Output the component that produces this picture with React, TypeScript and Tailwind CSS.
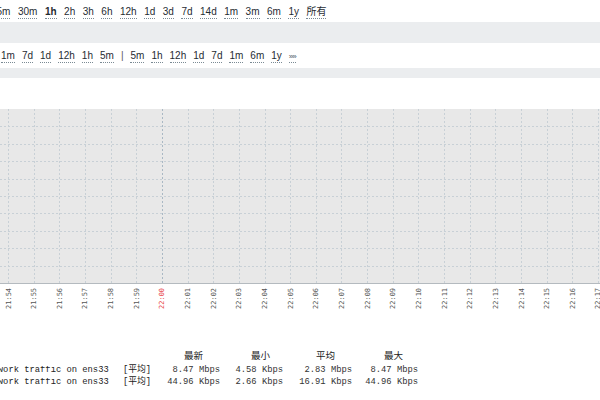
import React from "react";

const zoomLinks = ["15m", "30m", "1h", "2h", "3h", "6h", "12h", "1d", "3d", "7d", "14d", "1m", "3m", "6m", "1y", "所有"];
const navLinks = ["1m", "7d", "1d", "12h", "1h", "5m", "|", "5m", "1h", "12h", "1d", "7d", "1m", "6m", "1y", "»»"];

// minute labels along the x axis, 21:54 .. 22:17
const ticks = Array.from({ length: 24 }, (_, i) => {
  const total = 21 * 60 + 54 + i;
  const h = Math.floor(total / 60);
  const m = total % 60;
  return `${h}:${String(m).padStart(2, "0")}`;
});

const STEP = 25.65;
const GRID_H = 174;

function Chart() {
  return (
    <svg width={600} height={240} className="block">
      <rect x={0} y={0} width={600} height={GRID_H} fill="#e8e8e8" />
      {/* horizontal grid */}
      {Array.from({ length: 9 }, (_, k) => {
        const y = Math.round((k + 1) * 17.4) + 0.5;
        return (
          <line key={"h" + k} x1={0} x2={600} y1={y} y2={y} stroke="#c8d0d6" strokeDasharray="2 2" />
        );
      })}
      {/* vertical grid */}
      {ticks.map((t, i) => {
        const x = Math.round(8 + i * STEP) + 0.5;
        return (
          <line
            key={"v" + i}
            x1={x}
            x2={x}
            y1={0}
            y2={GRID_H}
            stroke={t === "22:00" ? "#a9b8c4" : "#c8d0d6"}
            strokeDasharray="2 2"
          />
        );
      })}
      <line x1={0} x2={600} y1={GRID_H + 0.5} y2={GRID_H + 0.5} stroke="#b4babf" />
      {ticks.map((t, i) => {
        const x = 8 + i * STEP;
        return (
          <text
            key={"t" + i}
            transform={`translate(${x + 2.5}, 200) rotate(-90)`}
            fontSize={7}
            fontFamily="'DejaVu Sans Mono', monospace"
            fill={t === "22:00" ? "#e8434a" : "#555"}
          >
            {t}
          </text>
        );
      })}
    </svg>
  );
}

const rows = [
  { vals: ["8.47 Mbps", "4.58 Kbps", "2.83 Mbps", "8.47 Mbps"] },
  { vals: ["44.96 Kbps", "2.66 Kbps", "16.91 Kbps", "44.96 Kbps"] },
];

function Legend() {
  const mono = "font-['Liberation_Mono','Noto_Sans_CJK_SC',monospace]";
  return (
    <div className={`${mono} text-[8.8px] text-[#222] leading-none`}>
      <div className="flex h-[15px] items-center text-[9.5px]">
        <div className="w-[167px] shrink-0" />
        <div className="w-[53px] shrink-0 pr-[17px] text-right">最新</div>
        <div className="w-[63px] shrink-0 pr-[13px] text-right">最小</div>
        <div className="w-[69px] shrink-0 pr-[17px] text-right">平均</div>
        <div className="w-[66px] shrink-0 pr-[15px] text-right">最大</div>
      </div>
      {rows.map((r, i) => (
        <div key={i} className="flex h-[12px] items-center whitespace-pre">
          <div className="ml-[-18px] w-[141px] shrink-0 overflow-hidden">Network traffic on ens33</div>
          <div className="w-[44px] shrink-0">[平均]</div>
          <div className="w-[53px] shrink-0 text-right text-[#333]">{r.vals[0]}</div>
          <div className="w-[63px] shrink-0 text-right text-[#333]">{r.vals[1]}</div>
          <div className="w-[69px] shrink-0 text-right text-[#333]">{r.vals[2]}</div>
          <div className="w-[66px] shrink-0 text-right text-[#333]">{r.vals[3]}</div>
        </div>
      ))}
    </div>
  );
}

export default function App() {
  return (
    <div className="w-[600px] h-[400px] overflow-hidden bg-white font-['Liberation_Sans','Noto_Sans_CJK_SC',sans-serif] text-[10px] text-[#1f2c33]">
      {/* zoom row */}
      <div className="h-[22px] flex items-center overflow-hidden">
        <ul className="ml-[-9px] flex gap-[7.5px] whitespace-nowrap">
          {zoomLinks.map((l, i) => (
            <li key={i}>
              <span
                className={`border-b border-dotted border-[#7a8a94] pb-[1px] ${l === "1h" ? "font-bold" : ""}`}
              >
                {l}
              </span>
            </li>
          ))}
        </ul>
      </div>
      <div className="h-[21px] bg-[#ebedef]" />
      {/* navigation row */}
      <div className="h-[25px] flex items-center overflow-hidden">
        <ul className="ml-[1px] flex gap-[7px] whitespace-nowrap">
          {navLinks.map((l, i) =>
            l === "|" ? (
              <li key={i} className="text-[#555]">|</li>
            ) : (
              <li key={i}>
                <span
                  className={`border-b border-dotted border-[#7a8a94] pb-[1px] ${l === "»»" ? "text-[8px] tracking-[-1px] text-[#4a5a66]" : ""}`}
                >
                  {l}
                </span>
              </li>
            )
          )}
        </ul>
      </div>
      <div className="h-[10px] bg-[#ebedef]" />
      <div className="h-[31px]" />
      <Chart />
      <Legend />
    </div>
  );
}
